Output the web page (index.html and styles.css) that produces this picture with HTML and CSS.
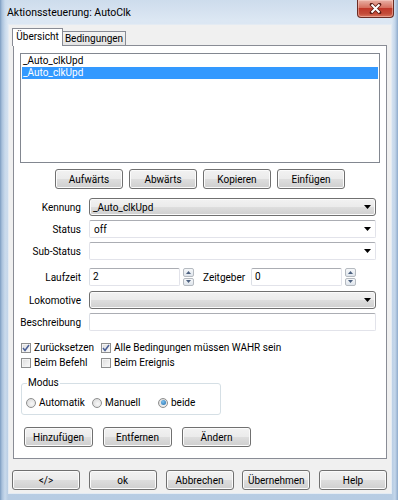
FILE: index.html
```html
<!DOCTYPE html>
<html lang="de">
<head>
  <meta charset="UTF-8">
  <title>Aktionssteuerung: AutoClk</title>
  <link rel="stylesheet" href="styles.css">
</head>
<body>

<div class="window">
  <div class="titlebar">
    <span class="title">Aktionssteuerung: AutoClk</span>
    <div class="close">
      <svg width="13" height="11" viewBox="0 0 13 11">
        <path d="M2.5 1.5 L10.5 9.5 M10.5 1.5 L2.5 9.5" stroke="#5a1a12" stroke-width="3.6" stroke-linecap="round"/>
        <path d="M2.5 1.5 L10.5 9.5 M10.5 1.5 L2.5 9.5" stroke="#fff" stroke-width="2"/>
      </svg>
    </div>
  </div>

  <div class="client">
    <div class="tabs">
      <div class="tab active">Übersicht</div>
      <div class="tab tab-wide">Bedingungen</div>
    </div>

    <div class="panel">
      <div class="list">
        <div class="item">_Auto_clkUpd</div>
        <div class="item selected">_Auto_clkUpd</div>
      </div>

      <div class="button-row">
        <div class="btn">Aufwärts</div>
        <div class="btn">Abwärts</div>
        <div class="btn">Kopieren</div>
        <div class="btn">Einfügen</div>
      </div>

      <div class="form">
        <div class="row">
          <span class="label">Kennung</span>
          <div class="combo gray">_Auto_clkUpd<svg class="arrow" width="7" height="4" viewBox="0 0 7 4"><path d="M0 0 H7 L3.5 4 Z" fill="#000"/></svg></div>
        </div>
        <div class="row">
          <span class="label">Status</span>
          <div class="combo white">off<svg class="arrow" width="7" height="4" viewBox="0 0 7 4"><path d="M0 0 H7 L3.5 4 Z" fill="#000"/></svg></div>
        </div>
        <div class="row">
          <span class="label">Sub-Status</span>
          <div class="combo white"><svg class="arrow" width="7" height="4" viewBox="0 0 7 4"><path d="M0 0 H7 L3.5 4 Z" fill="#000"/></svg></div>
        </div>
        <div class="row row-spaced">
          <span class="label">Laufzeit</span>
          <div class="textbox num">2</div>
          <div class="spin">
            <div class="spin-btn"><svg width="5" height="3" viewBox="0 0 5 3"><path d="M0 3 L2.5 0 L5 3 Z" fill="#4c607f"/></svg></div>
            <div class="spin-btn"><svg width="5" height="3" viewBox="0 0 5 3"><path d="M0 0 L2.5 3 L5 0 Z" fill="#4c607f"/></svg></div>
          </div>
          <span class="label-inline">Zeitgeber</span>
          <div class="textbox num">0</div>
          <div class="spin">
            <div class="spin-btn"><svg width="5" height="3" viewBox="0 0 5 3"><path d="M0 3 L2.5 0 L5 3 Z" fill="#4c607f"/></svg></div>
            <div class="spin-btn"><svg width="5" height="3" viewBox="0 0 5 3"><path d="M0 0 L2.5 3 L5 0 Z" fill="#4c607f"/></svg></div>
          </div>
        </div>
        <div class="row row-loco">
          <span class="label">Lokomotive</span>
          <div class="combo gray"><svg class="arrow" width="7" height="4" viewBox="0 0 7 4"><path d="M0 0 H7 L3.5 4 Z" fill="#000"/></svg></div>
        </div>
        <div class="row">
          <span class="label">Beschreibung</span>
          <div class="textbox wide"></div>
        </div>
      </div>

      <div class="checks">
        <label class="check"><span class="box"><svg width="8" height="8" viewBox="0 0 8 8"><path d="M1 4 L3 6.5 L7 1" fill="none" stroke="#4a5f97" stroke-width="1.5"/></svg></span>Zurücksetzen</label>
        <label class="check"><span class="box"><svg width="8" height="8" viewBox="0 0 8 8"><path d="M1 4 L3 6.5 L7 1" fill="none" stroke="#4a5f97" stroke-width="1.5"/></svg></span>Alle Bedingungen müssen WAHR sein</label>
        <label class="check"><span class="box"></span>Beim Befehl</label>
        <label class="check"><span class="box"></span>Beim Ereignis</label>
      </div>

      <fieldset class="group">
        <legend>Modus</legend>
        <div class="radios">
          <label class="radio"><span class="circle"></span>Automatik</label>
          <label class="radio"><span class="circle"></span>Manuell</label>
          <label class="radio"><span class="circle on"><span class="dot"></span></span>beide</label>
        </div>
      </fieldset>

      <div class="button-row left">
        <div class="btn btn-edit">Hinzufügen</div>
        <div class="btn btn-edit">Entfernen</div>
        <div class="btn btn-edit">Ändern</div>
      </div>
    </div>

    <div class="dialog-buttons">
      <div class="btn">&lt;/&gt;</div>
      <div class="btn">ok</div>
      <div class="btn">Abbrechen</div>
      <div class="btn">Übernehmen</div>
      <div class="btn">Help</div>
    </div>
  </div>
</div>

</body>
</html>
```

FILE: styles.css
```css
* {
  box-sizing: border-box;
}
body {
  margin: 0;
  font-family: Roboto, "Noto Sans", sans-serif;
  font-size: 10px;
  color: #000;
  background: #fff;
}
.window {
  width: 398px;
  height: 500px;
  display: flex;
  flex-direction: column;
  background:
    linear-gradient(to right, #7c9cc0 0, #a9c1dc 2px, #c9daec 5px, rgba(201, 218, 236, 0) 8px),
    linear-gradient(to left, #8eaacb 0, #c4d6ea 3px, rgba(196, 214, 234, 0) 6px),
    linear-gradient(to bottom, #cddcec 0, #dce7f3 20px, #c3d5e9 60%, #b7cce3 100%);
}

/* title bar */
.titlebar {
  height: 24px;
  display: flex;
  justify-content: space-between;
  align-items: flex-start;
  padding: 0 4px 0 7px;
}
.title {
  line-height: 26px;
  font-size: 10.5px;
  color: #000;
}
.close {
  width: 37px;
  height: 18px;
  display: flex;
  align-items: center;
  justify-content: center;
  border: 1px solid #6b2c24;
  border-top: 0;
  border-radius: 0 0 4px 4px;
  background: linear-gradient(#e9b1a5 0, #d6705f 45%, #c0392a 50%, #c34b38 80%, #d8735c 100%);
  box-shadow: inset 0 0 0 1px rgba(255, 220, 210, 0.45);
}

/* client area */
.client {
  flex: 1;
  margin: 0 6px 6px 8px;
  padding: 3px 4px 0 3px;
  background: #f0f0f0;
  border: 1px solid #e4ebf3;
  display: flex;
  flex-direction: column;
}
.tabs {
  display: flex;
  align-items: flex-end;
  height: 17px;
  position: relative;
  z-index: 1;
}
.tab {
  height: 14px;
  width: 64px;
  margin-left: -1px;
  border: 1px solid #898c95;
  border-bottom: 0;
  background: linear-gradient(#f3f3f3, #e3e3e3);
  text-align: center;
  line-height: 13px;
}
.tab.active {
  height: 18px;
  width: 51px;
  margin-left: 0;
  margin-bottom: -1px;
  background: #fff;
  line-height: 15px;
}
.panel {
  height: 414px;
  margin-left: 1px;
  padding: 7px 6px 0 6px;
  background: #fff;
  border: 1px solid #898c95;
}

/* list box */
.list {
  height: 110px;
  border: 1px solid #828790;
  padding: 1px;
}
.item {
  height: 12px;
  line-height: 11px;
  padding-left: 1px;
}
.item.selected {
  background: #3399ff;
  color: #fff;
}

/* buttons */
.button-row {
  display: flex;
  justify-content: center;
  gap: 6px;
  margin-top: 6px;
}
.button-row.left {
  justify-content: flex-start;
  gap: 10px;
  padding-left: 4px;
  margin-top: 12px;
}
.btn {
  width: 68px;
  height: 20px;
  display: flex;
  align-items: center;
  justify-content: center;
  border: 1px solid #707070;
  border-radius: 3px;
  background: linear-gradient(#f2f2f2 0, #ebebeb 48%, #dddddd 52%, #cfcfcf 100%);
  box-shadow: inset 0 0 0 1px #fbfbfb;
}
.btn-edit {
  width: 69px;
}

/* form rows */
.form {
  margin-top: 9px;
  display: flex;
  flex-direction: column;
  gap: 4px;
}
.row {
  display: flex;
  align-items: center;
  height: 18px;
  gap: 8px;
}
.row-spaced {
  margin-top: 4px;
  gap: 0;
}
.row-loco {
  margin-top: 1px;
}
.label {
  width: 61px;
  flex: none;
  text-align: right;
  white-space: nowrap;
}
.row-spaced .label {
  margin-right: 8px;
}
.combo {
  width: 287px;
  height: 18px;
  display: flex;
  align-items: center;
  justify-content: space-between;
  padding: 0 4px 0 3px;
}
.combo.gray {
  border: 1px solid #707070;
  border-radius: 3px;
  background: linear-gradient(#f2f2f2 0, #ebebeb 48%, #dddddd 52%, #cfcfcf 100%);
  box-shadow: inset 0 0 0 1px #fbfbfb;
}
.combo.white {
  border: 1px solid #e2e3ea;
  border-top-color: #abadb3;
  border-radius: 2px;
  background: #fff;
  padding-left: 4px;
}
.arrow {
  margin-left: auto;
  flex: none;
}
.textbox {
  height: 18px;
  border: 1px solid #e2e3ea;
  border-top-color: #abadb3;
  border-left-color: #dbdfe6;
  border-radius: 2px;
  background: #fff;
  padding-left: 3px;
  line-height: 16px;
}
.textbox.num {
  width: 91px;
}
.textbox.wide {
  width: 287px;
}
.spin {
  width: 11px;
  height: 18px;
  margin-left: 3px;
  display: flex;
  flex-direction: column;
  gap: 1px;
}
.spin-btn {
  flex: 1;
  display: flex;
  align-items: center;
  justify-content: center;
  border: 1px solid #b5bac0;
  border-radius: 2px;
  background: linear-gradient(#f6f8fa, #dfe5ec);
}
.label-inline {
  width: 41px;
  margin: 0 7px 0 9px;
  white-space: nowrap;
}

/* check boxes */
.checks {
  margin-top: 10px;
  padding-left: 1px;
  display: grid;
  grid-template-columns: 80px auto;
  row-gap: 2px;
}
.check {
  display: flex;
  align-items: center;
  height: 13px;
  white-space: nowrap;
}
.box {
  width: 10px;
  height: 10px;
  margin-right: 3px;
  display: flex;
  align-items: center;
  justify-content: center;
  border: 1px solid #8e8f8f;
  background: linear-gradient(135deg, #dcdcdc, #fbfbfb);
  box-shadow: inset 0 0 0 1px #f4f4f4;
}

/* group box */
.group {
  width: 200px;
  min-width: 0;
  height: 38px;
  margin: 8px 0 0 1px;
  padding: 0 0 0 4px;
  border: 1px solid #d5dfe5;
  border-radius: 3px;
}
.group legend {
  padding: 0 1px;
  margin-left: 1px;
  line-height: 12px;
}
.radios {
  display: flex;
  align-items: center;
  margin-top: 8px;
}
.radio {
  width: 66px;
  flex: none;
  display: flex;
  align-items: center;
  white-space: nowrap;
}
.radio:last-child {
  width: auto;
}
.circle {
  width: 10px;
  height: 10px;
  margin-right: 3px;
  border-radius: 50%;
  border: 1px solid #8e8f8f;
  background: radial-gradient(circle at 60% 60%, #f8f8f8, #d4d4d4);
  display: flex;
  align-items: center;
  justify-content: center;
}
.dot {
  width: 5px;
  height: 5px;
  border-radius: 50%;
  background: radial-gradient(circle at 40% 35%, #7ec2f0, #1d6aa9);
}

/* dialog buttons */
.dialog-buttons {
  display: flex;
  justify-content: space-between;
  margin-top: 11px;
}
```
